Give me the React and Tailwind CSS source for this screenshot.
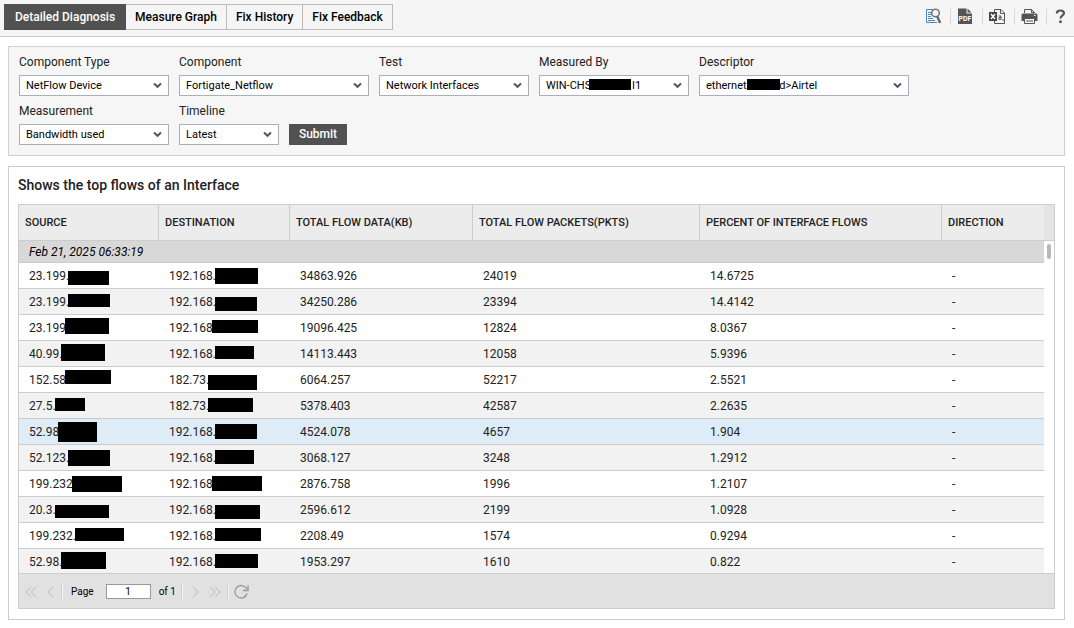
import React, { useState } from "react";
import clsx from "clsx";

const tabs = ["Detailed Diagnosis", "Measure Graph", "Fix History", "Fix Feedback"];

const NBSP = "\u00a0";

const filters = [
  { id: "componentType", label: "Component Type", value: "NetFlow Device", width: "w-[150px]" },
  { id: "component", label: "Component", value: "Fortigate_Netflow", width: "w-[190px]" },
  { id: "test", label: "Test", value: "Network Interfaces", width: "w-[150px]" },
  {
    id: "measuredBy",
    label: "Measured By",
    value: "WIN-CHS" + NBSP.repeat(15) + "I1",
    width: "w-[150px]",
    mask: "left-[50px] w-[42px]",
  },
  {
    id: "descriptor",
    label: "Descriptor",
    value: "ethernet" + NBSP.repeat(12) + "d>Airtel",
    width: "w-[210px]",
    mask: "left-[48px] w-[33px]",
  },
  { id: "measurement", label: "Measurement", value: "Bandwidth used", width: "w-[150px]" },
  { id: "timeline", label: "Timeline", value: "Latest", width: "w-[100px]" },
];

const columns = [
  { name: "SOURCE", width: "w-[140px]" },
  { name: "DESTINATION", width: "w-[131px]" },
  { name: "TOTAL FLOW DATA(KB)", width: "w-[183px]" },
  { name: "TOTAL FLOW PACKETS(PKTS)", width: "w-[227px]" },
  { name: "PERCENT OF INTERFACE FLOWS", width: "w-[242px]" },
  { name: "DIRECTION", width: "" },
];

// address: [visible part, mask width, mask height, mask position]
const flows = [
  { src: ["23.199.", 41, 14, "low"], dst: ["192.168.", 43, 16, "mid"], data: "34863.926", packets: "24019", percent: "14.6725" },
  { src: ["23.199.", 42, 13, "mid"], dst: ["192.168.", 42, 14, "low"], data: "34250.286", packets: "23394", percent: "14.4142" },
  { src: ["23.199", 44, 16, "high"], dst: ["192.168", 46, 13, "mid"], data: "19096.425", packets: "12824", percent: "8.0367" },
  { src: ["40.99.", 44, 17, "high"], dst: ["192.168.", 39, 13, "mid"], data: "14113.443", packets: "12058", percent: "5.9396" },
  { src: ["152.58", 46, 14, "high"], dst: ["182.73.", 49, 15, "low"], data: "6064.257", packets: "52217", percent: "2.5521" },
  { src: ["27.5.", 30, 13, "mid"], dst: ["182.73.", 45, 14, "mid"], data: "5378.403", packets: "42587", percent: "2.2635" },
  { src: ["52.98", 39, 20, "high"], dst: ["192.168.", 42, 15, "mid"], data: "4524.078", packets: "4657", percent: "1.904" },
  { src: ["52.123.", 42, 16, "mid"], dst: ["192.168.", 39, 14, "mid"], data: "3068.127", packets: "3248", percent: "1.2912" },
  { src: ["199.232", 50, 16, "mid"], dst: ["192.168", 50, 15, "mid"], data: "2876.758", packets: "1996", percent: "1.2107" },
  { src: ["20.3.", 54, 13, "low"], dst: ["192.168.", 45, 14, "low"], data: "2596.612", packets: "2199", percent: "1.0928" },
  { src: ["199.232.", 49, 13, "mid"], dst: ["192.168.", 46, 13, "mid"], data: "2208.49", packets: "1574", percent: "0.9294" },
  { src: ["52.98.", 45, 17, "high"], dst: ["192.168.", 43, 14, "mid"], data: "1953.297", packets: "1610", percent: "0.822" },
];

const maskTop = { high: "mt-[3px]", mid: "mt-[5px]", low: "mt-[8px]" };

function PreviewIcon() {
  return (
    <svg width="17" height="17" viewBox="0 0 17 17" fill="none">
      <path d="M8 1.5H1.5v13H12" stroke="#4f86b5" />
      <path d="M3 4.5h3M3 6.5h3M3 8.5h3M3 10.5h5M3 12.5h7" stroke="#4f86b5" />
      <circle cx="10.5" cy="5" r="3.8" fill="#f5f5f5" stroke="#777" strokeWidth="1.6" />
      <path d="M12.3 8.5l2.8 6.5" stroke="#666" strokeWidth="2.4" />
    </svg>
  );
}

function PdfIcon() {
  return (
    <svg width="16" height="17" viewBox="0 0 16 17">
      <path d="M1 0.5h8.5v5H15V16H1z" fill="#555" />
      <path d="M10.5 0.5l4 4h-4z" fill="#555" />
      <text x="8" y="13" textAnchor="middle" fill="#fff" fontSize="7" fontWeight="700" fontFamily="Roboto, sans-serif">
        PDF
      </text>
    </svg>
  );
}

function ExcelIcon() {
  return (
    <svg width="17" height="17" viewBox="0 0 17 17" fill="none">
      <path d="M5.5 4V1.5h6.5l3.5 3.5v10.5h-10V13" stroke="#555" />
      <path d="M11.5 1.5v4h4" stroke="#555" />
      <path d="M0 4h8v9H0z" fill="#444" />
      <path d="M2 6l4 5M6 6l-4 5" stroke="#fff" strokeWidth="1.4" />
      <path d="M9.5 8h2.5v3.5H10v-2h2M14 11v2" stroke="#555" />
    </svg>
  );
}

function PrintIcon() {
  return (
    <svg width="17" height="17" viewBox="0 0 17 17" fill="none">
      <path d="M3.5 5V1.5h7l3 3V5" stroke="#555" />
      <path d="M10.5 1.5v3h3" stroke="#555" />
      <path d="M2 5.5h13a1.5 1.5 0 0 1 1.5 1.5v6H.5V7A1.5 1.5 0 0 1 2 5.5z" fill="#555" />
      <path d="M13 7.5h1.5" stroke="#fff" />
      <path d="M3.5 10.5h10v5h-10z" fill="#f5f5f5" stroke="#555" />
      <path d="M5 13h7" stroke="#555" />
    </svg>
  );
}

function HelpIcon() {
  return (
    <svg width="11" height="15" viewBox="0 0 11 15" fill="none">
      <path d="M1.8 4.6C1.8 2.6 3.3 1.5 5.4 1.5S9 2.6 9 4.3C9 6.5 5.5 6.6 5.5 9.6" stroke="#555" strokeWidth="2.2" />
      <path d="M4.2 11.5h2.6V14H4.2z" fill="#555" />
    </svg>
  );
}

const tools = [
  { name: "Preview", Icon: PreviewIcon },
  { name: "Export to PDF", Icon: PdfIcon },
  { name: "Export to Excel", Icon: ExcelIcon },
  { name: "Print", Icon: PrintIcon },
];

function Filter({ id, label, value, width, mask }) {
  return (
    <div className={clsx("flex flex-col gap-[5px]", width)}>
      <label htmlFor={id} className="text-xs leading-4 text-[#222]">
        {label}
      </label>
      <div className="relative">
        <select
          id={id}
          className="block w-full h-[21px] appearance-none border border-[#abafb9] bg-white pl-[6px] pr-5 text-[11px] leading-4 text-black"
        >
          <option>{value}</option>
        </select>
        {mask && <span className={clsx("absolute top-1 h-[11px] bg-black", mask)}></span>}
        <svg
          className="absolute right-[7px] top-[7px] pointer-events-none"
          width="9"
          height="7"
          viewBox="0 0 9 7"
          fill="none"
        >
          <path d="M1 1.5l3.5 3.3L8 1.5" stroke="#555" strokeWidth="2" />
        </svg>
      </div>
    </div>
  );
}

function Address({ value }) {
  const [text, width, height, position] = value;
  return (
    <div className="flex items-start h-[25px]">
      <span className="leading-[26px]">{text}</span>
      <span className={clsx("-ml-px bg-black", maskTop[position])} style={{ width, height }}></span>
    </div>
  );
}

function PageButton({ label, path }) {
  return (
    <button type="button" aria-label={label} className="w-5 h-5 flex items-center justify-center">
      <svg width="12" height="12" viewBox="0 0 12 12" fill="none">
        <path d={path} stroke="#c8c8c8" strokeWidth="1.2" />
      </svg>
    </button>
  );
}

function Divider() {
  return <span className="w-px h-[15px] bg-[#f5f5f5] border-l border-[#cfcfcf] box-content"></span>;
}

export default function App() {
  const [activeTab, setActiveTab] = useState(tabs[0]);
  const [page, setPage] = useState("1");

  return (
    <div className="bg-white font-[Roboto,sans-serif] text-xs text-[#222]">
      {/* Top bar */}
      <header className="flex items-center justify-between h-[37px] pl-1 pb-[3px] bg-[#f5f5f5] border-b border-[#ccc]">
        <nav className="flex">
          {tabs.map((tab) => (
            <button
              key={tab}
              type="button"
              onClick={() => setActiveTab(tab)}
              className={clsx(
                "h-[26px] font-medium border-y border-r",
                tab === activeTab
                  ? "bg-[#515151] border-[#515151] text-white border-l px-[10px]"
                  : "border-[#bbb] text-black px-[9px]"
              )}
            >
              {tab}
            </button>
          ))}
        </nav>
        <div className="flex items-center">
          {tools.map(({ name, Icon }) => (
            <button
              key={name}
              type="button"
              aria-label={name}
              className="w-8 h-4 pr-[3px] flex items-center justify-center border-r border-[#d8d8d8]"
            >
              <Icon />
            </button>
          ))}
          <button type="button" aria-label="Help" className="w-[27px] h-4 flex items-center justify-center">
            <HelpIcon />
          </button>
        </div>
      </header>

      <main className="flex flex-col gap-[10px] pt-[9px] pl-2 pr-[9px] pb-2">
        {/* Filters */}
        <form
          className="flex flex-wrap items-end gap-x-[10px] gap-y-[7px] border border-[#d0d0d0] bg-[#f6f6f6] px-[10px] pt-[7px] pb-[10px]"
          onSubmit={(e) => e.preventDefault()}
        >
          {filters.map((filter) => (
            <Filter key={filter.id} {...filter} />
          ))}
          <button type="submit" className="h-[21px] w-[58px] pb-0.5 bg-[#515151] font-medium text-white">
            Submit
          </button>
        </form>

        {/* Results */}
        <section className="border border-[#ccc] px-[9px] pt-2 pb-[10px]">
          <h1 className="text-sm leading-5 font-medium mb-[9px]">Shows the top flows of an Interface</h1>
          <div className="border border-[#ccc]">
            <div className="h-92 overflow-hidden">
              <table className="w-full table-fixed border-separate border-spacing-0">
                <thead>
                  <tr className="h-9 bg-[#ececec] text-left text-[11px]">
                    {columns.map((col, index) => (
                      <th
                        key={col.name}
                        className={clsx(
                          "pl-[6px] pt-0.5 font-medium border-b border-[#ccc]",
                          col.width,
                          index < columns.length - 1 && "border-r"
                        )}
                      >
                        {col.name}
                      </th>
                    ))}
                    <td className="w-[10px] bg-[#e4e4e4] border-b border-[#ccc]"></td>
                  </tr>
                </thead>
                <tbody>
                  <tr className="h-[22px]">
                    <td colSpan={6} className="pl-[10px] bg-[#d8d8d8] border-b border-[#ccc] italic text-black">
                      Feb 21, 2025 06:33:19
                    </td>
                    <td rowSpan={flows.length + 1} className="align-top bg-white">
                      <div className="w-1 h-[15px] mt-[3px] ml-[3px] rounded-sm bg-[#b8b8b8]"></div>
                    </td>
                  </tr>
                  {flows.map((flow, index) => (
                    <tr
                      key={index}
                      className={clsx(
                        "h-[26px] *:pl-[10px] *:border-b *:border-[#ccc]",
                        index === 6 ? "bg-[#deecf7]" : index % 2 ? "bg-[#f2f2f2]" : "bg-white"
                      )}
                    >
                      <td>
                        <Address value={flow.src} />
                      </td>
                      <td>
                        <Address value={flow.dst} />
                      </td>
                      <td>{flow.data}</td>
                      <td>{flow.packets}</td>
                      <td>{flow.percent}</td>
                      <td>-</td>
                    </tr>
                  ))}
                </tbody>
              </table>
            </div>

            {/* Pagination */}
            <div className="flex items-center h-[35px] pl-0.5 pt-px border-t border-[#ccc] bg-[#e1e1e1] text-[10px] text-black">
              <PageButton label="First page" path="M6 1L1 6l5 5M11 1L6 6l5 5" />
              <PageButton label="Previous page" path="M8 1L3 6l5 5" />
              <Divider />
              <label htmlFor="page" className="ml-2 mr-3">
                Page
              </label>
              <input
                id="page"
                value={page}
                onChange={(e) => setPage(e.target.value)}
                className="w-[45px] h-[15px] mr-2 border border-[#999] bg-white text-center"
              />
              <span className="mr-[5px]">of 1</span>
              <Divider />
              <div className="flex px-0.5">
                <PageButton label="Next page" path="M4 1l5 5-5 5" />
                <PageButton label="Last page" path="M1 1l5 5-5 5M6 1l5 5-5 5" />
              </div>
              <Divider />
              <button type="button" aria-label="Refresh" className="ml-1">
                <svg width="16" height="16" viewBox="0 0 16 16" fill="none">
                  <path d="M13.6 5A6.2 6.2 0 1 0 14 9.5" stroke="#999" strokeWidth="1.4" />
                  <path d="M15 1.5v5h-5" stroke="#999" strokeWidth="1.4" />
                </svg>
              </button>
            </div>
          </div>
        </section>
      </main>
    </div>
  );
}
